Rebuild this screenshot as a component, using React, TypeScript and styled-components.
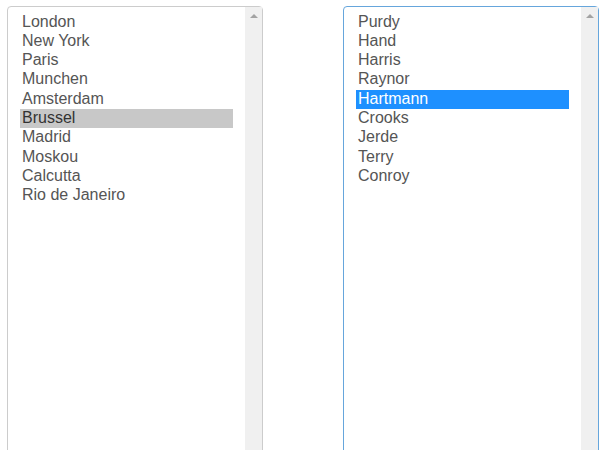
import React from 'react';
import styled, { createGlobalStyle } from 'styled-components';

const GlobalStyle = createGlobalStyle`
  html, body {
    margin: 0;
    padding: 0;
    background: #fff;
    overflow: hidden;
  }
  body {
    font-family: 'Liberation Sans', Arial, sans-serif;
  }
`;

const cities = [
  'London',
  'New York',
  'Paris',
  'Munchen',
  'Amsterdam',
  'Brussel',
  'Madrid',
  'Moskou',
  'Calcutta',
  'Rio de Janeiro',
];

const names = ['Purdy', 'Hand', 'Harris', 'Raynor', 'Hartmann', 'Crooks', 'Jerde', 'Terry', 'Conroy'];

interface ListBoxProps {
  items: string[];
  selected: string;
  focused?: boolean;
}

const ListBox: React.FC<ListBoxProps> = ({ items, selected, focused = false }) => {
  return (
    <StyledBox $focused={focused}>
      <List>
        {items.map((item) => (
          <Option key={item} $selected={item === selected} $focused={focused}>
            {item}
          </Option>
        ))}
      </List>
      <ScrollTrack>
        <UpArrow />
      </ScrollTrack>
    </StyledBox>
  );
};

const App: React.FC = () => {
  return (
    <>
      <GlobalStyle />
      <Page>
        <ListBox items={cities} selected="Brussel" />
        <ListBox items={names} selected="Hartmann" focused />
      </Page>
    </>
  );
};

const Page = styled.div`
  display: flex;
  gap: 80px;
  height: 450px;
  box-sizing: border-box;
  overflow: hidden;
  padding: 6px 0 0 7px;
`;

const StyledBox = styled.div<{ $focused: boolean }>`
  display: flex;
  flex-shrink: 0;
  width: 256px;
  height: 470px;
  box-sizing: border-box;
  border: 1px solid ${(p) => (p.$focused ? '#66a6dc' : '#cccccc')};
  border-radius: 4px;
  background: #fff;
`;

const List = styled.div`
  flex: 1;
  padding: 5.5px 12px;
  color: #555555;
  font-size: 16px;
`;

const Option = styled.div<{ $selected: boolean; $focused: boolean }>`
  box-sizing: border-box;
  height: 19.33px;
  padding: 0 2px 1px;
  line-height: 18.33px;
  white-space: nowrap;
  overflow: hidden;
  background: ${(p) => (p.$selected ? (p.$focused ? '#1e90ff' : '#c8c8c8') : 'transparent')};
  color: ${(p) => (p.$selected && p.$focused ? '#ffffff' : p.$selected ? '#333333' : '#555555')};
`;

const ScrollTrack = styled.div`
  width: 17px;
  background: #f0f0f0;
  display: flex;
  justify-content: center;
  padding-top: 7px;
  box-sizing: border-box;
`;

const UpArrow = styled.div`
  width: 0;
  height: 0;
  border-left: 4px solid transparent;
  border-right: 4px solid transparent;
  border-bottom: 4px solid #a3a3a3;
`;

export default App;
